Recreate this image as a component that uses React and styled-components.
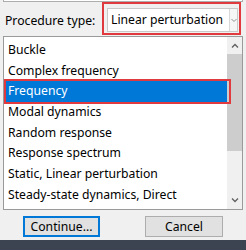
import React from "react";
import styled, { createGlobalStyle } from "styled-components";

const Global = createGlobalStyle`
  html, body { margin: 0; padding: 0; background: #f0f0f0; }
  body { font-family: "Noto Sans", "Liberation Sans", sans-serif; font-size: 12.2px; color: #000; }
`;

const Dialog = styled.div`
  width: 246px;
  height: 250px;
  background: #f0f0f0;
  display: flex;
  flex-direction: column;
  overflow: hidden;
`;

const TopStub = styled.div`
  height: 1px;
  margin: 0 3px;
  background: #fff;
  border: 1px solid #adadad;
  border-top: none;
`;

const TypeRow = styled.div`
  display: flex;
  align-items: center;
  height: 33px;
  padding-left: 5px;
  padding-right: 5px;
`;

const Label = styled.span`
  flex: 0 0 97px;
  white-space: nowrap;
  padding-top: 4px;
`;

const Annot = styled.div`
  border: 2px solid #e0393e;
  padding: 4px 1px 1px 3px;
  height: 33px;
  box-sizing: border-box;
  flex: 1;
  min-width: 0;
  display: flex;
`;

const Combo = styled.div`
  flex: 1;
  min-width: 0;
  display: flex;
  background: #fff;
  border: 1px solid #c9c9c9;
  overflow: hidden;
`;

const ComboText = styled.div`
  flex: 1;
  min-width: 0;
  overflow: hidden;
  padding-left: 3px;
  line-height: 22px;
  white-space: nowrap;
`;

const ComboArrow = styled.div`
  flex: 0 0 7px;
  border-left: 1px solid #d8d8d8;
  display: flex;
  align-items: center;
  justify-content: center;
  background: #f6f6f6;
`;

const ListBox = styled.div`
  margin: 1px 3px 0 3px;
  height: 172px;
  background: #fff;
  border: 1px solid #9a9a9a;
  display: flex;
`;

const Items = styled.ul`
  list-style: none;
  margin: 0;
  padding: 3px 0 0 1px;
  flex: 1;
  min-width: 0;
`;

const Item = styled.li`
  position: relative;
  height: 20.7px;
  line-height: 20.7px;
  padding-left: 3px;
  white-space: nowrap;
  background: ${(p) => (p.$selected ? "#0078d7" : "transparent")};
  color: ${(p) => (p.$selected ? "#fff" : "#000")};

  ${(p) =>
    p.$selected &&
    `
    &::after {
      content: "";
      position: absolute;
      top: -2px;
      left: -1px;
      right: -4px;
      bottom: -2px;
      border: 2px solid #e0393e;
    }
  `}
`;

const ScrollBar = styled.div`
  flex: 0 0 15px;
  background: #f0f0f0;
  display: flex;
  flex-direction: column;
  align-items: center;
`;

const ScrollBtn = styled.div`
  height: 17px;
  width: 15px;
  display: flex;
  align-items: center;
  justify-content: center;
`;

const Thumb = styled.div`
  width: 15px;
  height: 97px;
  background: #cdcdcd;
`;

const Track = styled.div`
  flex: 1;
`;

const Buttons = styled.div`
  display: flex;
  justify-content: space-between;
  padding: 6px 23px 0 23px;
`;

const Button = styled.button`
  width: ${(p) => p.$w}px;
  height: 21px;
  padding: 0;
  font-family: inherit;
  font-size: 12.2px;
  color: #000;
  background: #e1e1e1;
  border: 1px solid ${(p) => (p.$focus ? "#0078d7" : "#adadad")};
  box-shadow: ${(p) => (p.$focus ? "inset 0 0 0 1px #0078d7" : "none")};
`;

const Spacer = styled.div`
  flex: 1;
`;

const Taskbar = styled.div`
  height: 10px;
  background: #3d4451;
`;

const Chevron = ({ up }) => (
  <svg width="8" height="5" viewBox="0 0 8 5">
    <path
      d={up ? "M1 4.5 L4 1.5 L7 4.5" : "M1 0.5 L4 3.5 L7 0.5"}
      fill="none"
      stroke="#606060"
      strokeWidth="1.3"
    />
  </svg>
);

const procedures = [
  "Buckle",
  "Complex frequency",
  "Frequency",
  "Modal dynamics",
  "Random response",
  "Response spectrum",
  "Static, Linear perturbation",
  "Steady-state dynamics, Direct",
];

export default function App() {
  return (
    <Dialog>
      <Global />
      <TopStub />
      <TypeRow>
        <Label>Procedure type:</Label>
        <Annot>
          <Combo>
            <ComboText>Linear perturbation</ComboText>
            <ComboArrow>
              <svg width="6" height="5" viewBox="0 0 6 5">
                <path d="M0.5 1 L3 3.5 L5.5 1" fill="none" stroke="#909090" strokeWidth="1" />
              </svg>
            </ComboArrow>
          </Combo>
        </Annot>
      </TypeRow>
      <ListBox>
        <Items>
          {procedures.map((name) => (
            <Item key={name} $selected={name === "Frequency"}>
              {name}
            </Item>
          ))}
        </Items>
        <ScrollBar>
          <ScrollBtn>
            <Chevron up />
          </ScrollBtn>
          <Thumb />
          <Track />
          <ScrollBtn>
            <Chevron />
          </ScrollBtn>
        </ScrollBar>
      </ListBox>
      <Buttons>
        <Button $w={77} $focus>
          Continue...
        </Button>
        <Button $w={78}>Cancel</Button>
      </Buttons>
      <Spacer />
      <Taskbar />
    </Dialog>
  );
}
